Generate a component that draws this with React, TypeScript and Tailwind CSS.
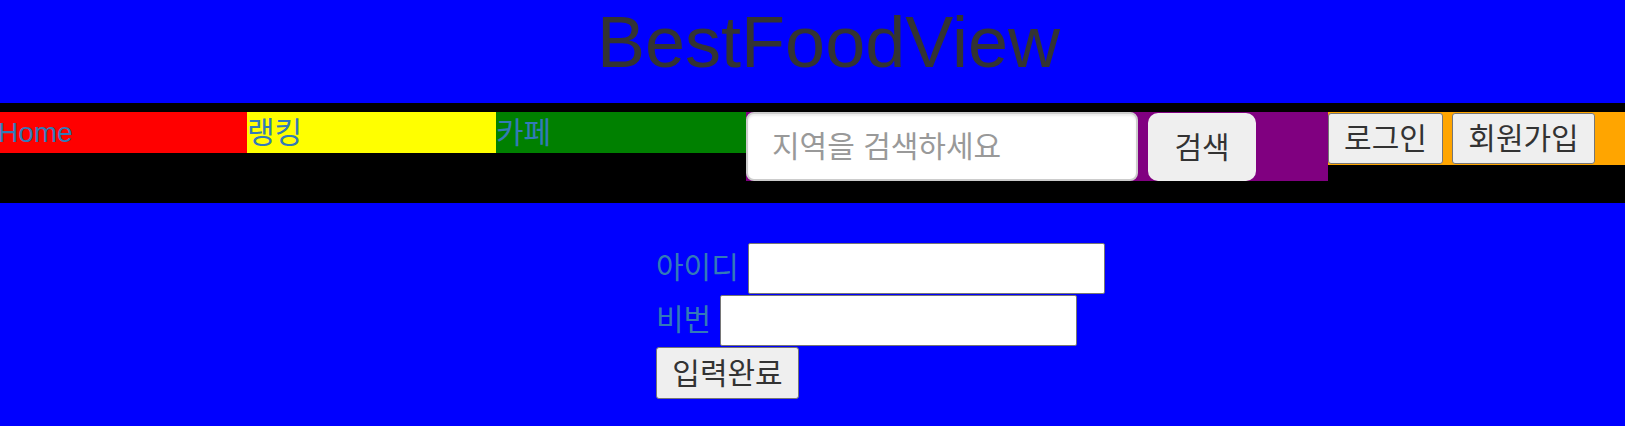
export default function App() {
  return (
    <div className="min-h-screen bg-[#0000ff] font-['Liberation_Sans','Noto_Sans_CJK_KR',sans-serif] text-[#333]">
      <header className="h-[103px] pl-[32px] text-center">
        <h1 className="pt-[1px] text-[72px] leading-[83px] font-normal">BestFoodView</h1>
      </header>

      <nav className="flex h-[100px] items-start bg-black pt-[9px] text-[30px]">
        <ul className="flex">
          <li className="h-[41px] w-[247px] bg-[#ff0000] text-[28px] leading-[41px] indent-[-2px] text-[#337ab7]">Home</li>
          <li className="h-[41px] w-[249px] bg-[#ffff00] leading-[41px] text-[#337ab7]">랭킹</li>
          <li className="h-[41px] w-[250px] bg-[#008000] leading-[41px] text-[#337ab7]">카페</li>
        </ul>

        <form className="flex h-[69px] w-[582px] items-end bg-[#800080]" onSubmit={e => e.preventDefault()}>
          <input
            type="text"
            placeholder="지역을 검색하세요"
            className="h-[69px] w-[392px] rounded-[8px] border-2 border-[#ccc] bg-white px-[24px] text-[#555] shadow-[inset_0_2px_2px_rgba(0,0,0,0.075)] outline-none placeholder:text-[#999]"
          />
          <button type="submit" className="ml-[10px] h-[68px] w-[108px] rounded-[10px] bg-[#efefef] text-[#333]">
            검색
          </button>
        </form>

        <div className="flex h-[53px] flex-1 items-center bg-[#ffa500]">
          <button className="h-[51px] w-[115px] rounded-[3px] border border-[#767676] bg-[#efefef] text-[#333]">
            로그인
          </button>
          <button className="ml-[9px] h-[51px] w-[143px] rounded-[3px] border border-[#767676] bg-[#efefef] text-[#333]">
            회원가입
          </button>
        </div>
      </nav>

      <form className="pl-[656px] pt-[40px] text-[30px]" onSubmit={e => e.preventDefault()}>
        <div className="flex h-[51px] items-center">
          <label className="mb-[2px] leading-[30px] text-[#337ab7]">아이디</label>
          <input type="text" className="ml-[9px] h-[51px] w-[357px] rounded-[2px] border border-[#767676] bg-white outline-none" />
        </div>
        <div className="mt-[1px] flex h-[51px] items-center">
          <label className="mb-[2px] leading-[30px] text-[#337ab7]">비번</label>
          <input type="password" className="ml-[9px] h-[51px] w-[357px] rounded-[2px] border border-[#767676] bg-white outline-none" />
        </div>
        <button type="submit" className="mt-[1px] h-[52px] w-[143px] rounded-[3px] border border-[#767676] bg-[#efefef] text-[#333]">
          입력완료
        </button>
      </form>
    </div>
  );
}
